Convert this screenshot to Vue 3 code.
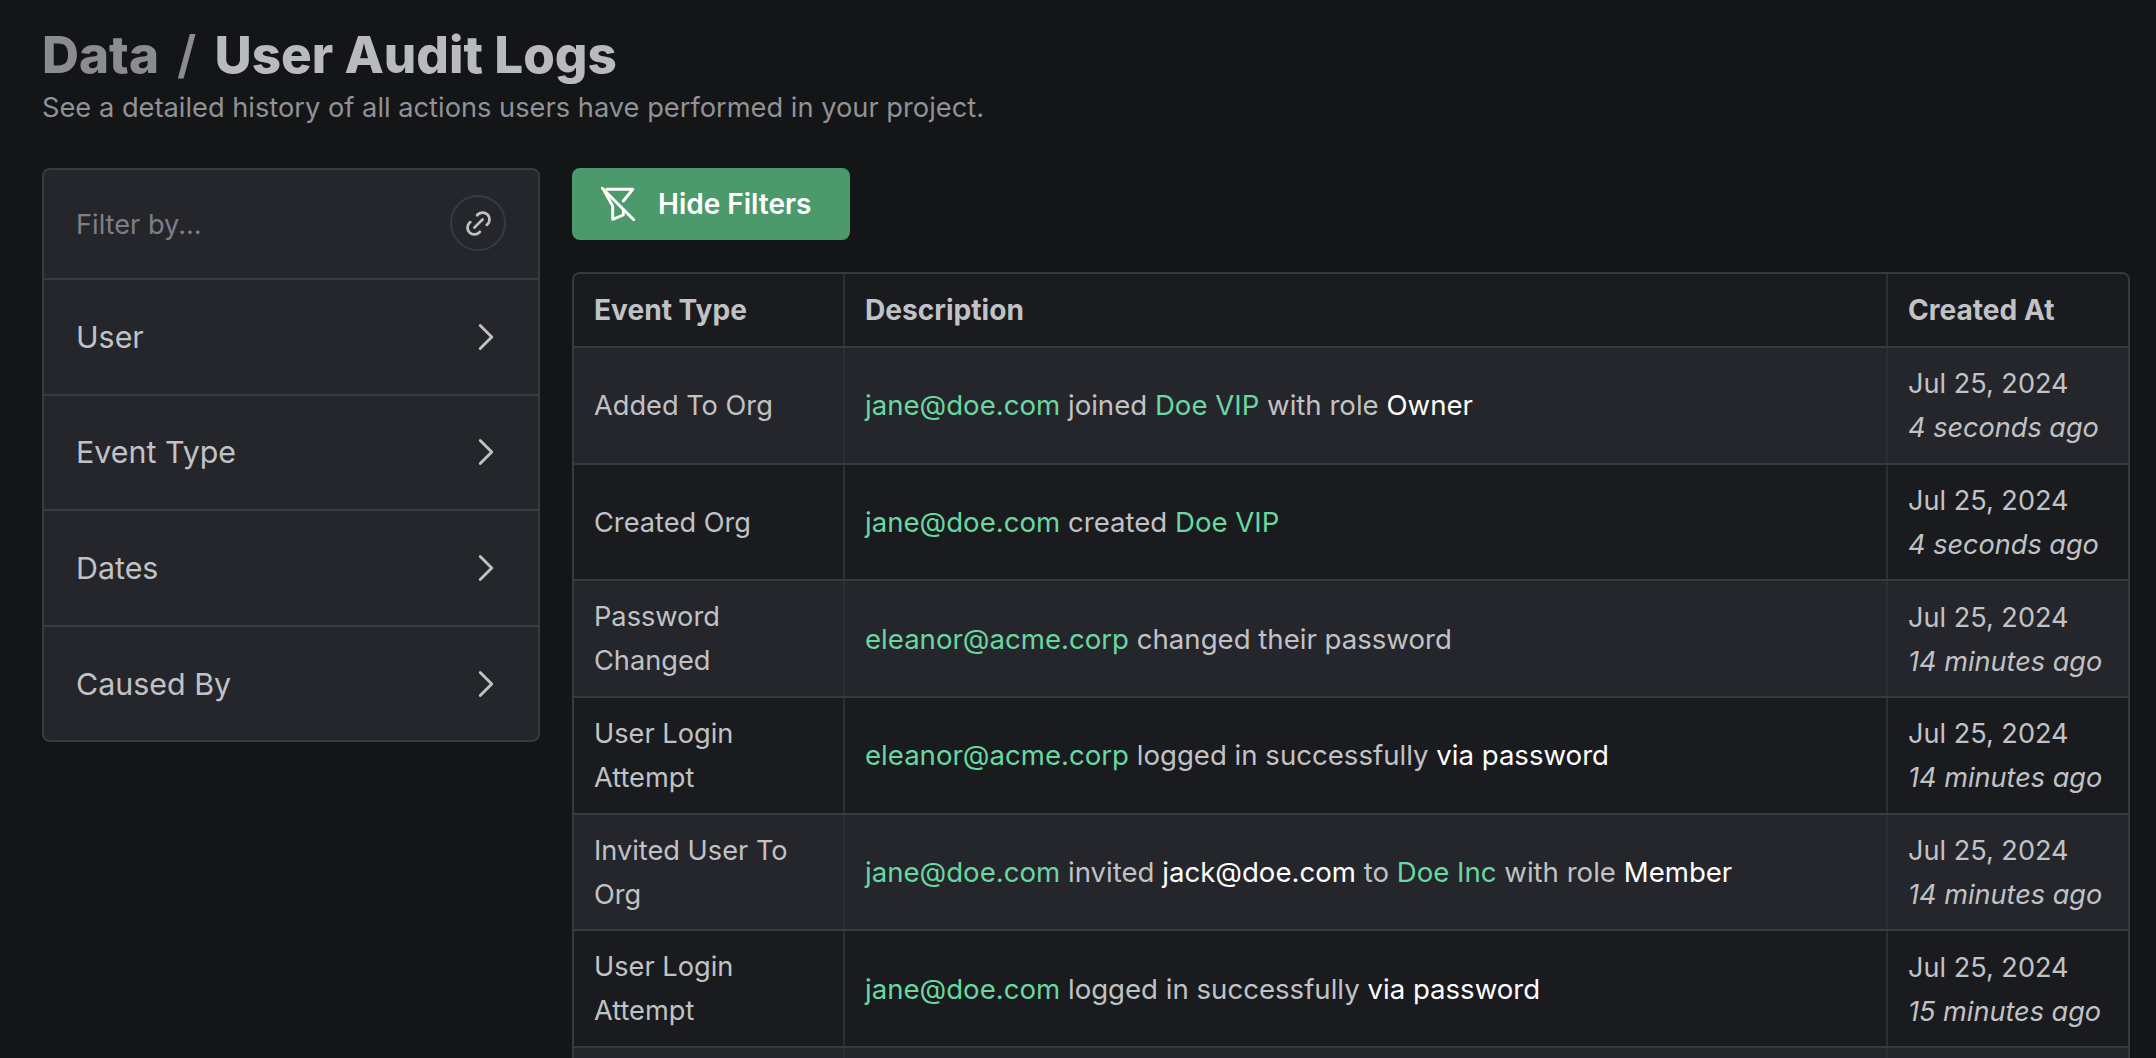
<script setup>
const filters = ['User', 'Event Type', 'Dates', 'Caused By']
const rows = [
  { type: 'Added To Org', date: 'Jul 25, 2024', ago: '4 seconds ago', desc: [['g', 'jane@doe.com'], ['', ' joined '], ['g', 'Doe VIP'], ['', ' with role '], ['w', 'Owner']] },
  { type: 'Created Org', date: 'Jul 25, 2024', ago: '4 seconds ago', desc: [['g', 'jane@doe.com'], ['', ' created '], ['g', 'Doe VIP']] },
  { type: 'Password Changed', date: 'Jul 25, 2024', ago: '14 minutes ago', desc: [['g', 'eleanor@acme.corp'], ['', ' changed their password']] },
  { type: 'User Login Attempt', date: 'Jul 25, 2024', ago: '14 minutes ago', desc: [['g', 'eleanor@acme.corp'], ['', ' logged in successfully '], ['w', 'via password']] },
  { type: 'Invited User To Org', date: 'Jul 25, 2024', ago: '14 minutes ago', desc: [['g', 'jane@doe.com'], ['', ' invited '], ['w', 'jack@doe.com'], ['', ' to '], ['g', 'Doe Inc'], ['', ' with role '], ['w', 'Member']] },
  { type: 'User Login Attempt', date: 'Jul 25, 2024', ago: '15 minutes ago', desc: [['g', 'jane@doe.com'], ['', ' logged in successfully '], ['w', 'via password']] },
  { type: '', date: '', ago: '', desc: [] }
]
</script>

<template>
  <div class="page">
    <header class="head">
      <h1 class="title"><span class="crumb">Data</span><span class="slash">/</span><span>User Audit Logs</span></h1>
      <p class="sub">See a detailed history of all actions users have performed in your project.</p>
    </header>
    <div class="main">
      <aside class="side">
        <div class="side-top">
          <span class="placeholder">Filter by...</span>
          <button class="link-btn" aria-label="Copy link">
            <svg width="33" height="33" viewBox="0 0 24 24" fill="none" stroke="currentColor" stroke-width="2" stroke-linecap="round" stroke-linejoin="round">
              <path d="M9 15l6 -6" />
              <path d="M11 6l.463 -.536a5 5 0 0 1 7.071 7.072l-.534 .464" />
              <path d="M13 18l-.397 .534a5.068 5.068 0 0 1 -7.127 0a4.972 4.972 0 0 1 0 -7.071l.524 -.463" />
            </svg>
          </button>
        </div>
        <div v-for="f in filters" :key="f" class="side-row">
          <span>{{ f }}</span>
          <svg width="46" height="46" viewBox="0 0 24 24" fill="none" stroke="currentColor" stroke-width="1.5" stroke-linecap="round" stroke-linejoin="round">
            <path d="m9 18 6-6-6-6" />
          </svg>
        </div>
      </aside>
      <section class="content">
        <button class="toggle">
          <svg width="34" height="34" viewBox="0 0 34 34" fill="none" stroke="currentColor" stroke-width="2.9" stroke-linecap="round" stroke-linejoin="round">
            <path d="M1 1 33 33" />
            <path d="M6 2.3H31.7L22.3 14" />
            <path d="M22.3 23V28L11.7 32.3V19L3.5 4.5" />
          </svg>
          <span>Hide Filters</span>
        </button>
        <div class="table-wrap">
          <table class="table">
            <colgroup>
              <col class="c1" />
              <col />
              <col class="c3" />
            </colgroup>
            <thead>
              <tr>
                <th>Event Type</th>
                <th>Description</th>
                <th>Created At</th>
              </tr>
            </thead>
            <tbody>
              <tr v-for="(r, i) in rows" :key="i">
                <td class="type">{{ r.type }}</td>
                <td class="desc">
                  <span v-for="(s, j) in r.desc" :key="j" class="seg" :class="s[0]">{{ s[1] }}</span>
                </td>
                <td class="when">
                  <template v-if="r.date">
                    <div>{{ r.date }}</div>
                    <div class="ago">{{ r.ago }}</div>
                  </template>
                </td>
              </tr>
            </tbody>
          </table>
        </div>
      </section>
    </div>
  </div>
</template>

<style>
html, body {
  margin: 0;
  height: 1058px;
  overflow: hidden;
  background: #141517;
}
</style>

<style scoped>
.page {
  height: 1058px;
  overflow: hidden;
  box-sizing: border-box;
  padding: 27px 26px 0 42px;
  background: #141517;
  font-family: Inter, "Noto Sans", sans-serif;
  color: #c1c2c5;
}
.title {
  margin: 0;
  display: flex;
  gap: 18px;
  font-size: 51.2px;
  line-height: 55px;
  font-weight: 800;
  letter-spacing: 0;
  color: #b9babe;
}
.crumb, .slash { color: #8b8c90; }
.slash { font-weight: 600; }
.sub {
  margin: 9px 0 0;
  font-size: 27.25px;
  line-height: 33px;
  color: #909296;
}
.main {
  display: flex;
  gap: 32px;
  margin-top: 44px;
  align-items: flex-start;
}
.side {
  width: 498px;
  flex: none;
  box-sizing: border-box;
  border: 2px solid #373a40;
  border-radius: 8px;
  background: #25262b;
}
.side-top {
  height: 108px;
  display: flex;
  align-items: center;
  justify-content: space-between;
  padding: 0 33px 0 32px;
}
.placeholder {
  font-size: 27.2px;
  color: #7d7f85;
}
.link-btn {
  width: 56px;
  height: 56px;
  margin-right: -1px;
  margin-top: -2px;
  display: flex;
  align-items: center;
  justify-content: center;
  padding: 0;
  border: 2px solid #373a40;
  border-radius: 50%;
  background: transparent;
  color: #c1c2c5;
}
.side-row {
  height: 115.6px;
  box-sizing: border-box;
  border-top: 2px solid #373a40;
  display: flex;
  align-items: center;
  justify-content: space-between;
  padding: 0 29px 0 32px;
  font-size: 30.4px;
  color: #c1c2c5;
}
.content {
  flex: 1;
  min-width: 0;
}
.toggle {
  display: flex;
  align-items: center;
  gap: 23px;
  height: 72px;
  box-sizing: border-box;
  padding: 0 39px 0 29px;
  border: none;
  border-radius: 8px;
  background: #4c9a6b;
  color: #fff;
  font-family: inherit;
  font-size: 28px;
  font-weight: 600;
}
.table-wrap {
  margin-top: 32px;
  border: 2px solid #373a40;
  border-radius: 8px;
  overflow: hidden;
}
.table {
  width: 100%;
  table-layout: fixed;
  border-collapse: collapse;
  line-height: 44px;
}
.c1 { width: 270px; }
.c3 { width: 241px; }
th {
  height: 72px;
  padding: 0 20px;
  text-align: left;
  font-size: 28.1px;
  font-weight: 700;
  background: #1a1b1e;
  border-bottom: 2px solid #373a40;
  border-left: 2px solid #2c2e33;
}
td {
  height: 116.7px;
  padding: 0 20px;
  box-sizing: border-box;
  border-bottom: 2px solid #373a40;
  border-left: 2px solid #2c2e33;
  vertical-align: middle;
}
.type { font-size: 27.2px; padding-top: 1px; }
.desc { font-size: 27.6px; }
.when { font-size: 27.1px; padding-top: 2px; }
th:first-child, td:first-child { border-left: none; }
tbody tr:nth-child(odd) td { background: #25262b; }
tbody tr:nth-child(even) td { background: #1a1b1e; }
.seg { white-space: pre-wrap; }
.g { color: #68d8a0; }
.w { color: #fff; }
.ago { font-style: italic; }
</style>
